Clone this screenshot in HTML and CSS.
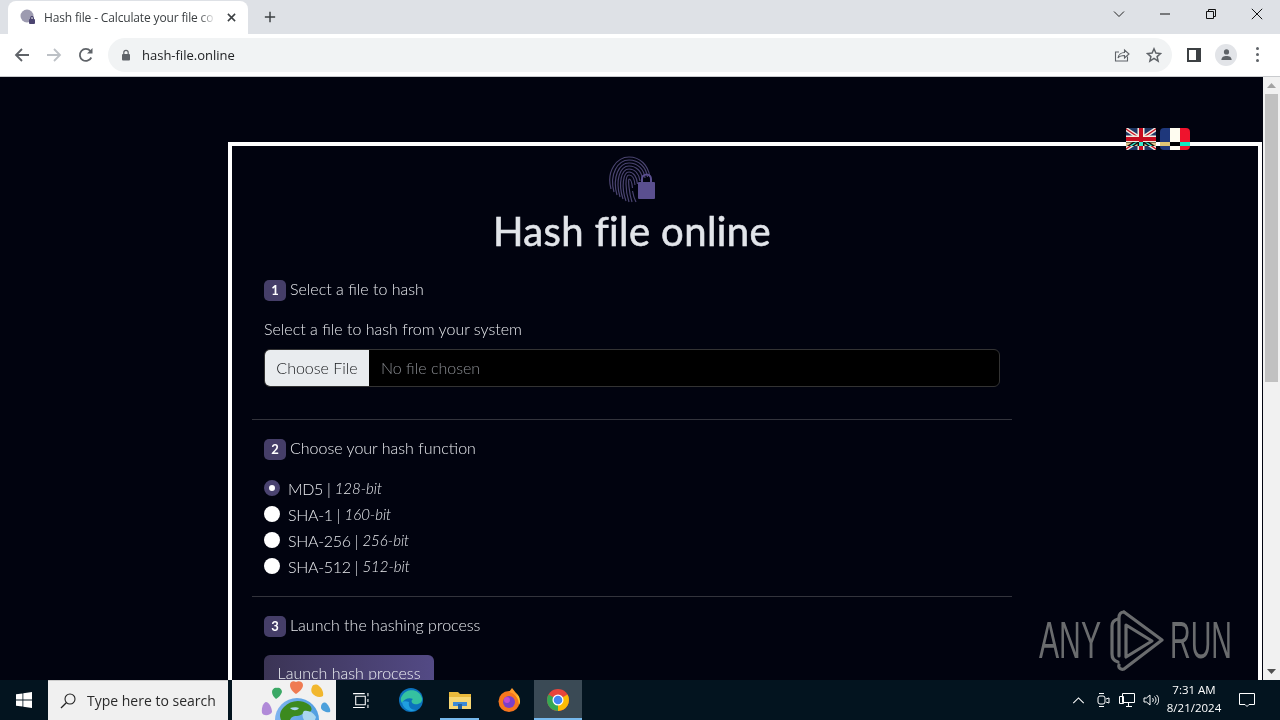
FILE: index.html
```html
<!DOCTYPE html>
<html lang="en">
<head>
<meta charset="utf-8">
<title>Hash file online</title>
<link rel="stylesheet" href="styles.css">
</head>
<body>
<div class="screen">
  <div class="tabbar">
    <div class="tab">
      <svg class="favicon" viewBox="0 0 16 16"><circle cx="7" cy="7" r="6.5" fill="#9d9bb0"/><rect x="9" y="10" width="6" height="5" rx="1" fill="#4b4470"/><path d="M10.5 10V8.8a1.5 1.5 0 0 1 3 0V10" fill="none" stroke="#4b4470"/></svg>
      <span class="tab-title">Hash file - Calculate your file co</span>
      <svg class="tab-x" viewBox="0 0 10 10"><path d="M1 1l8 8M9 1l-8 8" stroke="#3c4043" stroke-width="1.7"/></svg>
    </div>
    <svg class="newtab" viewBox="0 0 14 14"><path d="M7 1v12M1 7h12" stroke="#3c4043" stroke-width="1.7"/></svg>
    <div class="spacer"></div>
    <div class="winctl">
      <svg viewBox="0 0 12 12"><path d="M1 3.5l5 5 5-5" fill="none" stroke="#222" stroke-width="1"/></svg>
      <svg viewBox="0 0 12 12"><path d="M1 6h10" stroke="#111" stroke-width="1"/></svg>
      <svg viewBox="0 0 12 12"><path d="M1.5 3.5h7v7h-7zM3.5 3.5v-2h7v7h-2" fill="none" stroke="#111" stroke-width="1"/></svg>
      <svg viewBox="0 0 12 12"><path d="M.8.8l10.4 10.4M11.2.8L.8 11.2" stroke="#111" stroke-width="1"/></svg>
    </div>
  </div>
  <div class="toolbar">
    <svg class="nav nav-back" viewBox="0 0 16 16"><path d="M15 8H2M8 2L2 8l6 6" fill="none" stroke="#5f6368" stroke-width="1.8"/></svg>
    <svg class="nav nav-fwd" viewBox="0 0 16 16"><path d="M1 8h13M8 2l6 6-6 6" fill="none" stroke="#bdc1c6" stroke-width="1.8"/></svg>
    <svg class="nav nav-reload" viewBox="0 0 16 16"><path d="M13.3 10.5A6 6 0 1 1 12.4 4" fill="none" stroke="#5f6368" stroke-width="1.8"/><path d="M14.5 1v5.5H9z" fill="#5f6368"/></svg>
    <div class="omnibox">
      <svg class="lock" viewBox="0 0 10 12"><rect x="1" y="5" width="8" height="6.5" rx="1" fill="#5f6368"/><path d="M2.8 5V3.5a2.2 2.2 0 0 1 4.4 0V5" fill="none" stroke="#5f6368" stroke-width="1.2"/></svg>
      <span class="url">hash-file.online</span>
      <div class="spacer"></div>
      <svg class="omni-icon" viewBox="0 0 16 16"><path d="M13.5 9.5v4.5H1.5V5h3.5" fill="none" stroke="#5f6368" stroke-width="1.1"/><path d="M4 11c.5-3.500 3.500-5.500 6.500-5.500V3l4.500 4-4.500 4V8.500C8 8.500 5.500 9 4 11z" fill="none" stroke="#5f6368" stroke-width="1.1"/></svg>
      <svg class="omni-icon" viewBox="0 0 16 16"><path d="M8 1.800l1.900 4.200 4.600.5-3.400 3.100 1 4.500L8 11.300l-4.100 2.800 1-4.500L1.500 6.500l4.600-.5z" fill="none" stroke="#5f6368" stroke-width="1.500"/></svg>
    </div>
    <svg class="side-icon" viewBox="0 0 14 14"><rect x="1" y="1" width="12" height="12" fill="none" stroke="#3c4043" stroke-width="2"/><rect x="9" y="1" width="4" height="12" fill="#3c4043"/></svg>
    <div class="avatar"><svg viewBox="0 0 14 14"><circle cx="7" cy="4.200" r="2.800" fill="#5f6368"/><path d="M1.500 13c0-3.500 2.500-4.500 5.500-4.500s5.500 1 5.500 4.500z" fill="#5f6368"/></svg></div>
    <div class="dots"><i></i><i></i><i></i></div>
  </div>
  <div class="viewport">
    <main class="page">
      <div class="flags">
        <svg class="flag" viewBox="0 0 30 22"><rect width="30" height="22" rx="4" fill="#1f3a73"/><path d="M0 1l30 20M30 1L0 21" stroke="#f3eded" stroke-width="4"/><path d="M0 1l30 20M30 1L0 21" stroke="#c8102e" stroke-width="1.300"/><path d="M15 0v22M0 11h30" stroke="#f3eded" stroke-width="7"/><path d="M15 0v22M0 11h30" stroke="#c8102e" stroke-width="4"/></svg>
        <svg class="flag" viewBox="0 0 30 22"><path d="M4 0h6v22H4a4 4 0 0 1-4-4V4a4 4 0 0 1 4-4z" fill="#1f3a8a"/><rect x="10" width="10" height="22" fill="#fff"/><path d="M20 0h6a4 4 0 0 1 4 4v14a4 4 0 0 1-4 4h-6z" fill="#f0163c"/></svg>
      </div>
      <section class="card">
        <div class="column">
          <header class="hero">
            <svg class="logo" viewBox="0 0 48 48" fill="none" stroke="#4a4470" stroke-width="1.200">
              <path d="M3 34C-2 16 9 2 21 2c11 0 19 8 21 20"/>
              <path d="M6 37C1 19 10 5 21 5c10 0 17 7 18.500 17"/>
              <path d="M9 40C4 22 11 8 21 8c8.500 0 15 6 16 15"/>
              <path d="M12 42C7 25 12 11 21 11c7 0 12.500 5 13.500 13"/>
              <path d="M15 44c-5-15-2-30 6-30 6 0 10 5 11 12"/>
              <path d="M18 46c-5-14-3-29 3-29 4.500 0 8 5 8.500 12"/>
              <path d="M21 47c-4-12-4-27 0-27 3.500 0 5.500 4 6 10"/>
              <path d="M24 47c-3-9-4-23-3-23 2 0 3 4 3.500 9"/>
              <path d="M28 47c-1.500-3-3-8-3.500-11"/>
              <rect x="30" y="27" width="17" height="17" rx="1" fill="#5a4f8f" stroke="none"/>
              <path d="M34 27v-3a4.500 4.500 0 0 1 9 0v3" stroke="#5a4f8f" stroke-width="2"/>
            </svg>
            <h1 class="title">Hash file online</h1>
          </header>

          <div class="section section-first">
            <h2 class="step"><span class="badge">1</span>Select a file to hash</h2>
            <label class="field-label">Select a file to hash from your system</label>
            <div class="file-input">
              <span class="file-btn">Choose File</span>
              <span class="file-name">No file chosen</span>
            </div>
          </div>
          <hr class="rule">

          <div class="section">
            <h2 class="step"><span class="badge">2</span>Choose your hash function</h2>
            <ul class="radios">
              <li class="radio-row"><span class="radio radio-on"></span>MD5 |&nbsp;<em>128-bit</em></li>
              <li class="radio-row"><span class="radio"></span>SHA-1 |&nbsp;<em>160-bit</em></li>
              <li class="radio-row"><span class="radio"></span>SHA-256 |&nbsp;<em>256-bit</em></li>
              <li class="radio-row"><span class="radio"></span>SHA-512 |&nbsp;<em>512-bit</em></li>
            </ul>
          </div>
          <hr class="rule rule-tight">

          <div class="section">
            <h2 class="step"><span class="badge">3</span>Launch the hashing process</h2>
            <button class="launch">Launch hash process</button>
          </div>
        </div>
      </section>
      <div class="watermark">
        <span class="wm-text wm-any">ANY</span>
        <svg class="wm-logo" viewBox="0 0 54 61" fill="none" stroke="#6a6c6e" stroke-width="3.200" stroke-linejoin="round" stroke-linecap="round"><path d="M8 9C4 10 2 12 2 16v28c0 4 2 7 6 8"/><path d="M14 2C10 2 9 5 9 8v38"/><path d="M14 2l38 28-38 29c-3 1-6-1-5-4"/><path d="M16 15l26 16-26 16z"/></svg>
        <span class="wm-text wm-run">RUN</span>
      </div>
    </main>
    <div class="scrollbar">
      <div class="sb-arrow"><svg viewBox="0 0 9 5"><path d="M0 5l4.500-5L9 5z" fill="#a3a3a3"/></svg></div>
      <div class="sb-thumb"></div>
      <div class="spacer"></div>
      <div class="sb-arrow"><svg viewBox="0 0 9 5"><path d="M0 0l4.500 5L9 0z" fill="#505050"/></svg></div>
    </div>
  </div>
  <footer class="taskbar">
    <div class="start"><svg viewBox="0 0 16 16"><path d="M0 2.300l6.500-.9v6.200H0zM7.300 1.300L16 0v7.600H7.300zM0 8.400h6.500v6.200L0 13.700zM7.300 8.400H16V16l-8.700-1.300z" fill="#fff"/></svg></div>
    <div class="search">
      <svg viewBox="0 0 16 16"><circle cx="10" cy="6" r="5" fill="none" stroke="#222" stroke-width="1.100"/><path d="M6.300 9.700L1 15" stroke="#222" stroke-width="1.300"/></svg>
      <span>Type here to search</span>
    </div>
    <div class="widget">
      <svg viewBox="0 0 104 40">
        <defs><linearGradient id="sky" x1="0" y1="0" x2="1" y2="0"><stop offset="0" stop-color="#7fb4f0"/><stop offset="1" stop-color="#4f9ee0"/></linearGradient></defs>
        <circle cx="65" cy="40" r="22" fill="url(#sky)"/>
        <path d="M52 27c6-7 17-8 24-3 5 3 5 8-1 9-5 0-6 3-10 3-5 0-6 2-7 4h-9c-2-5-1-9 3-13z" fill="#3c8a1e"/>
        <path d="M72 31c4-1 9 1 12 6l-1 3H72c-2-3-2-7 0-9z" fill="#a9d6ef"/>
        <path d="M58 28c3-1 7-1 9 0-2 3-6 3-9 0z" fill="#a9d6ef"/>
        <path d="M30 33c-1-6 2-11 4-11 3 0 6 6 6 10-1 3-8 5-10 1z" fill="#b08ad8"/>
        <path d="M40 12c0-3 3-5 5-4 2-1 5 1 5 4-1 3-3 5-6 7-2-2-4-4-4-7z" fill="#3ba865"/>
        <path d="M58 5c0-3 3-5 6-3 3-2 7 0 7 3 0 4-4 7-7 9-3-2-6-5-6-9z" fill="#ef7b52"/>
        <path d="M80 7c1-3 5-3 7-1 3 2 5 7 4 10-3 2-8 1-11-3-1-2-1-4 0-6z" fill="#f1b72e"/>
        <path d="M90 24c1-2 4-2 5 0 2 2 4 6 3 8-3 1-8-1-9-4 0-2 0-3 1-4z" fill="#4ca0dc"/>
      </svg>
    </div>
    <div class="tb-btn tb-task"><svg class="ico-task" viewBox="0 0 16 16" fill="none" stroke="#fff"><path d="M3.500 4h9v8h-9zM1 1.500h11M1 14.500h11M15 1v3M15 6.500v3M15 12v3"/></svg></div>
    <div class="tb-btn tb-edge"><svg class="ico-app" viewBox="0 0 24 24"><circle cx="12" cy="12" r="12" fill="#0c72bd"/><path d="M3 8C7 0 20 0 23 10c1 5-4 7-8 6-3-1-3-4-1-5-4-2-9 0-11 4-2-3-1-6 0-7z" fill="#35c1a0"/><path d="M3 14c1 7 8 11 14 8-5 0-8-3-7-8-3-1-5-1-7 0z" fill="#1f9fe0"/></svg></div>
    <div class="tb-btn tb-open"><svg class="ico-app" viewBox="0 0 24 24"><path d="M1 4h9l2 2h11v15H1z" fill="#e9b93c"/><rect x="1" y="9" width="22" height="12" fill="#f7d774"/><rect x="5" y="14" width="14" height="4" fill="#3b8ad8"/><rect x="10" y="16" width="4" height="5" fill="#245f9e"/></svg></div>
    <div class="tb-btn tb-fox"><svg class="ico-app" viewBox="0 0 24 24"><circle cx="12" cy="13.500" r="10.500" fill="#f6761e"/><path d="M12 3c5 0 11 3 11 10 0 1 0 3-1 4 0-6-3-11-10-14z" fill="#ffc52e"/><path d="M15 0c2 3 5 5 6 9-3-3-6-4-9-5z" fill="#ff9a2a"/><circle cx="12" cy="14" r="6" fill="#7a3fc9"/><circle cx="10" cy="12" r="3" fill="#c14bd1"/></svg></div>
    <div class="tb-btn tb-active"><svg class="ico-app" viewBox="0 0 24 24"><circle cx="12" cy="12" r="11" fill="#e8453c"/><path d="M12 12L2.500 6.500A11 11 0 0 0 12 23z" fill="#35a853"/><path d="M12 12l9.500-5.500A11 11 0 0 1 12 23z" fill="#fbbc05"/><circle cx="12" cy="12" r="5.500" fill="#fff"/><circle cx="12" cy="12" r="4.300" fill="#4285f4"/></svg></div>
    <div class="spacer"></div>
    <div class="tray">
      <svg class="tray-chev" viewBox="0 0 14 8"><path d="M1 7l6-6 6 6" fill="none" stroke="#fff" stroke-width="1.200"/></svg>
      <svg class="tray-ico" viewBox="0 0 16 16" fill="none" stroke="#fff"><rect x="3" y="4" width="7" height="8" rx="2"/><path d="M11 7l3-1v5l-3-1M4 1.500h5M4 14.500h5"/></svg>
      <svg class="tray-ico" viewBox="0 0 16 16" fill="none" stroke="#fff"><path d="M3.500 1.500h12v9h-12zM.5 4.500h4v7h-4zM7 14.500h6M9.500 10.500v4"/></svg>
      <svg class="tray-ico" viewBox="0 0 16 16" fill="none" stroke="#fff"><path d="M1 6h2.500L7 3v10L3.500 10H1zM9.500 6c1 1 1 3 0 4M11.500 4.500c2 2 2 5 0 7M13.500 3c3 3 3 7 0 10"/></svg>
      <div class="clock"><span>7:31 AM</span><span>8/21/2024</span></div>
      <svg class="tray-note" viewBox="0 0 16 16" fill="none" stroke="#fff"><path d="M.5 1.500h15v11H10l-2 2-2-2H.5z"/></svg>
    </div>
  </footer>
</div>
</body>
</html>
```
FILE: styles.css
```css
* { box-sizing: border-box; }
html, body { margin: 0; padding: 0; height: 100%; overflow: hidden; }
body { font-family: "Lato", "Open Sans", sans-serif; }
.screen { width: 1280px; height: 720px; display: flex; flex-direction: column; overflow: hidden; background: #01030f; }
.spacer { flex: 1; }

/* browser chrome */
.tabbar { height: 34px; background: #dee1e6; display: flex; align-items: flex-end; padding-left: 8px; flex: none; }
.tab { width: 240px; height: 33px; background: #fff; border-radius: 8px 8px 0 0; display: flex; align-items: center; padding: 0 10px 1px 12px; }
.favicon { width: 16px; height: 16px; flex: none; }
.tab-title { font: 12px "Open Sans", sans-serif; letter-spacing: -.15px; color: #3c4043; margin-left: 8px; width: 172px; white-space: nowrap; overflow: hidden; -webkit-mask-image: linear-gradient(90deg, #000 90%, transparent); mask-image: linear-gradient(90deg, #000 90%, transparent); }
.tab-x { width: 9px; height: 9px; margin-left: 11px; flex: none; }
.newtab { width: 12px; height: 12px; margin: 0 0 11px 16px; flex: none; }
.winctl { display: flex; align-self: stretch; align-items: flex-start; }
.winctl svg { width: 12px; height: 12px; margin: 8px 17px 0; }
.winctl svg + svg { margin-left: 17px; }

.toolbar { height: 43px; background: #fff; border-bottom: 1px solid #c9cbce; display: flex; align-items: center; flex: none; padding-bottom: 1px; }
.nav { width: 16px; height: 16px; flex: none; }
.nav-back { margin-left: 14px; }
.nav-fwd { margin-left: 16px; }
.nav-reload { margin-left: 16px; }
.omnibox { width: 1064px; height: 34px; margin-left: 14px; border-radius: 17px; background: #f1f3f4; display: flex; align-items: center; padding: 0 10px 0 13px; flex: none; }
.lock { width: 10px; height: 12px; flex: none; }
.url { font: 13px "Open Sans", sans-serif; color: #202124; margin-left: 11px; }
.omni-icon { width: 16px; height: 16px; margin-left: 16px; flex: none; }
.side-icon { width: 14px; height: 14px; margin-left: 15px; flex: none; }
.avatar { width: 22px; height: 22px; border-radius: 50%; background: #e2e4e8; margin-left: 14px; display: flex; align-items: center; justify-content: center; flex: none; }
.avatar svg { width: 13px; height: 13px; }
.dots { margin-left: 19px; display: flex; flex-direction: column; gap: 3px; flex: none; }
.dots i { width: 3px; height: 3px; background: #5f6368; border-radius: 50%; display: block; }

/* page viewport */
.viewport { flex: 1; min-height: 0; display: flex; }
.page { position: relative; width: 1263px; overflow: hidden; padding: 65px 1px 0 228px; background: #01030f; color: #e4e6ea; flex: none; }
.flags { position: absolute; left: 1126px; top: 51px; display: flex; gap: 4px; mix-blend-mode: difference; z-index: 2; }
.flag { width: 30px; height: 22px; display: block; }
.card { border: 4px solid #fff; border-bottom: 0; width: 1034px; height: 700px; }
.column { width: 760px; margin-left: 20px; }
.hero { display: flex; flex-direction: column; align-items: center; padding-top: 9px; }
.logo { width: 48px; height: 48px; display: block; margin-left: 0; }
.title { margin: 4px 0 0; font-size: 40px; line-height: 48px; font-weight: 400; letter-spacing: .4px; -webkit-text-stroke: .6px #e2e5ea; color: #e2e5ea; }
.section { padding: 0 12px; }
.section-first { margin-top: 22px; }
.step { margin: 0; display: flex; align-items: center; font-size: 16px; line-height: 24px; font-weight: 300; color: #e8eaee; }
.badge { width: 22px; height: 21px; border-radius: 5px; background: #453e68; color: #fff; font-size: 13px; font-weight: 700; display: flex; align-items: center; justify-content: center; margin-right: 4px; margin-top: 2px; }
.field-label { display: block; margin-top: 16px; font-size: 16px; line-height: 24px; font-weight: 300; color: #e8eaee; }
.file-input { display: flex; align-items: stretch; height: 38px; margin-top: 8px; background: #000; border: 1px solid #333; border-radius: 6px; overflow: hidden; font-size: 16px; font-weight: 300; }
.file-btn { width: 104px; background: #e9ecef; color: #17191c; display: flex; align-items: center; justify-content: center; padding-bottom: 1px; }
.file-name { display: flex; align-items: center; padding: 0 0 1px 12px; color: #8b8e93; }
.rule { border: 0; border-top: 1px solid #33343c; margin: 32px 0 16px; }
.rule-tight { margin-top: 17px; }
.radios { list-style: none; margin: 15px 0 0; padding: 0; }
.radio-row { height: 26px; display: flex; align-items: center; font-size: 16px; font-weight: 300; letter-spacing: -.3px; color: #e8eaee; }
.radio-row em { font-size: 15px; letter-spacing: 0; }
.radio { width: 16px; height: 16px; border-radius: 50%; background: #fff; margin-right: 8px; flex: none; }
.radio-on { background: #fff; border: 5px solid #4a4370; }
.launch { display: block; width: 170px; height: 38px; margin-top: 18px; padding: 0 0 4px; border: 0; border-radius: 6px; background: linear-gradient(90deg, #3b3455, #534a85); color: #eceef2; font: 300 16px "Lato", sans-serif; }

/* sandbox watermark */
.watermark { position: absolute; left: 1039px; top: 533px; display: flex; align-items: center; color: #6a6c6e; }
.wm-text { font: 400 52px/61px "Liberation Sans", sans-serif; display: inline-block; width: 63px; transform-origin: 0 50%; white-space: nowrap; }
.wm-any { transform: scaleX(.58); }
.wm-run { transform: scaleX(.55); }
.wm-logo { width: 54px; height: 61px; margin: 0 6px 0 8px; }

.scrollbar { width: 17px; background: #f1f1f1; display: flex; flex-direction: column; align-items: center; flex: none; }
.sb-arrow { width: 17px; height: 17px; display: flex; align-items: center; justify-content: center; flex: none; }
.sb-arrow svg { width: 9px; height: 5px; }
.sb-thumb { width: 13px; height: 288px; background: #c1c1c1; flex: none; }

/* taskbar */
.taskbar { height: 40px; background: #03141f; display: flex; align-items: stretch; flex: none; color: #fff; }
.start { width: 48px; display: flex; align-items: center; justify-content: center; flex: none; }
.start svg { width: 16px; height: 16px; }
.search { width: 180px; background: #f0f0f0; border-top: 1px solid #ccc; display: flex; align-items: center; padding-left: 12px; color: #2a2a2a; font: 14px "Open Sans", sans-serif; flex: none; }
.search svg { width: 16px; height: 16px; margin-right: 11px; }
.widget { width: 104px; margin-left: 4px; background: #f1f1f1; overflow: hidden; flex: none; }
.widget svg { width: 104px; height: 40px; display: block; }
.tb-btn { width: 49px; display: flex; align-items: center; justify-content: center; flex: none; }
.tb-task { width: 48px; }
.tb-edge { margin-left: 2px; }
.tb-open { background: linear-gradient(#76b9ed, #76b9ed) center bottom / 39px 2px no-repeat; }
.tb-fox { width: 50px; }
.tb-active { width: 48px; background: #3a4a55 linear-gradient(#76b9ed, #76b9ed) center bottom / 48px 2px no-repeat; }
.ico-app { width: 24px; height: 24px; }
.ico-task { width: 17px; height: 17px; }
.tray { display: flex; align-items: center; }
.tray-chev { width: 13px; height: 7px; margin-right: 10px; }
.tray-ico { width: 16px; height: 16px; margin-right: 8px; }
.clock { display: flex; flex-direction: column; align-items: center; font: 11.5px/18px "Open Sans", sans-serif; width: 66px; margin: 0 12px 2px -6px; }
.tray-note { width: 16px; height: 16px; margin-right: 25px; }
```
